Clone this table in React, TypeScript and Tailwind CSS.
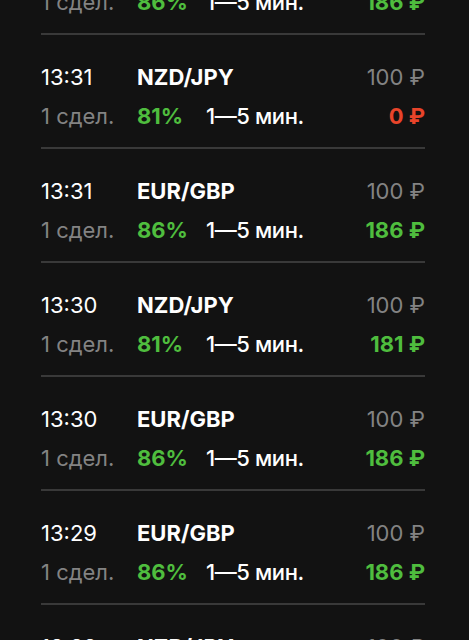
import React from "react";

type Deal = {
  time: string;
  pair: string;
  pct: string;
  payout: string;
  win: boolean;
};

const deals: Deal[] = [
  { time: "13:31", pair: "EUR/GBP", pct: "86%", payout: "186 ₽", win: true },
  { time: "13:31", pair: "NZD/JPY", pct: "81%", payout: "0 ₽", win: false },
  { time: "13:31", pair: "EUR/GBP", pct: "86%", payout: "186 ₽", win: true },
  { time: "13:30", pair: "NZD/JPY", pct: "81%", payout: "181 ₽", win: true },
  { time: "13:30", pair: "EUR/GBP", pct: "86%", payout: "186 ₽", win: true },
  { time: "13:29", pair: "EUR/GBP", pct: "86%", payout: "186 ₽", win: true },
  { time: "13:28", pair: "NZD/JPY", pct: "81%", payout: "100 ₽", win: true },
];

const DealRow = ({ deal }: { deal: Deal }) => (
  <div className="border-b-2 border-[#393939] pt-[28px] pb-[17px]">
    {/* время, пара, ставка */}
    <div className="flex items-center h-[28px] leading-[28px]">
      <span className="w-[96px] text-white">{deal.time}</span>
      <span className="text-white font-bold">{deal.pair}</span>
      <span className="ml-auto text-[#838383]">100 ₽</span>
    </div>
    {/* сделки, процент, время, выплата */}
    <div className="flex items-center h-[28px] leading-[28px] mt-[11px]">
      <span className="w-[96px] text-[#838383]">1 сдел.</span>
      <span className="w-[69px] text-[#4fbd3e] font-bold">{deal.pct}</span>
      <span className="text-white font-medium tracking-[-0.4px]">1—5 мин.</span>
      <span
        className={
          "ml-auto font-bold " +
          (deal.win ? "text-[#4fbd3e]" : "text-[#e8442a]")
        }
      >
        {deal.payout}
      </span>
    </div>
  </div>
);

export default function App() {
  return (
    <div
      className="w-full h-[640px] overflow-hidden bg-[#121212] text-[22px]"
      style={{ fontFamily: "Inter, 'Noto Sans', sans-serif" }}
    >
      <div className="ml-[41px] w-[384px] -mt-[79px]">
        {deals.map((d, i) => (
          <DealRow key={i} deal={d} />
        ))}
      </div>
    </div>
  );
}
